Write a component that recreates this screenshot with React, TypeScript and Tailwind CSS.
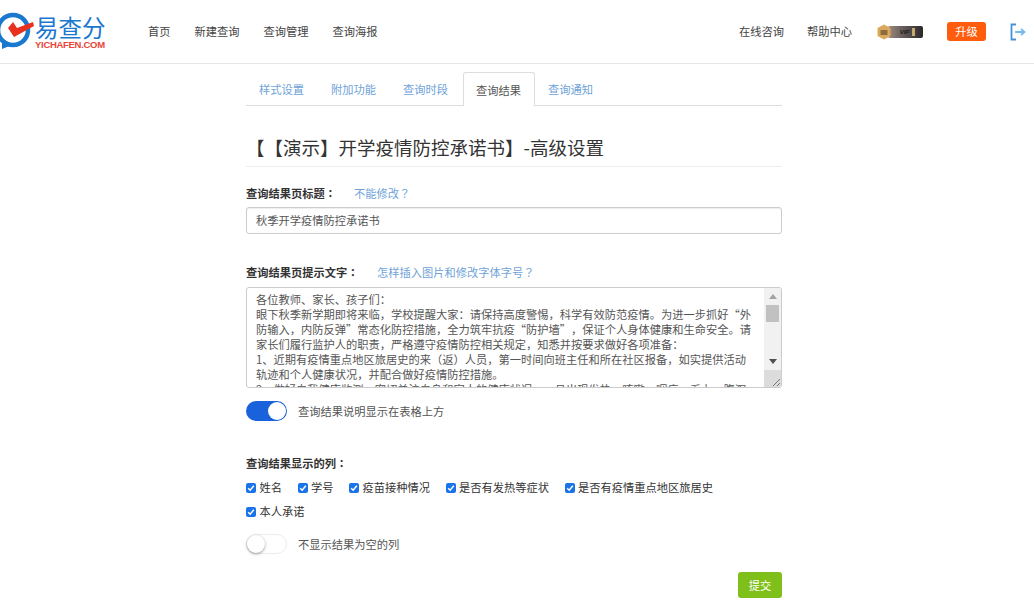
import React from "react"

const FONT = `"Noto Sans CJK SC", "Liberation Sans", sans-serif`
const PUNCT = `"Noto Sans CJK TC", sans-serif`

const navLeft = ["首页", "新建查询", "查询管理", "查询海报"]
const tabs = ["样式设置", "附加功能", "查询时段", "查询结果", "查询通知"]
const columns = ["姓名", "学号", "疫苗接种情况", "是否有发热等症状", "是否有疫情重点地区旅居史", "本人承诺"]

const notice = `各位教师、家长、孩子们：
眼下秋季新学期即将来临，学校提醒大家：请保持高度警惕，科学有效防范疫情。为进一步抓好“外防输入，内防反弹”常态化防控措施，全力筑牢抗疫“防护墙”，保证个人身体健康和生命安全。请家长们履行监护人的职责，严格遵守疫情防控相关规定，知悉并按要求做好各项准备：
1、近期有疫情重点地区旅居史的来（返）人员，第一时间向班主任和所在社区报备，如实提供活动轨迹和个人健康状况，并配合做好疫情防控措施。
2、做好自我健康监测，密切关注自身和家人的健康状况，一旦出现发热、咳嗽、咽痛、乏力、腹泻等症状，及时就医并报告学校。`

const LogoMark = () => (
  <svg width="36" height="50" viewBox="0 0 36 50" className="shrink-0">
    <circle cx="13" cy="23" r="15" fill="none" stroke="#1a78cf" strokeWidth="4.5" />
    <path d="M2 31 L2 42 L12 38 Z" fill="#1a78cf" />
    <path d="M8 21 L14 30 L34 19 L33 15 L17 21 L13 15 Z" fill="#e8301f" />
  </svg>
)

const VipBadge = () => (
  <div className="relative flex h-4 w-[47px] items-center">
    <div className="absolute right-0 flex h-3 w-[35px] items-center justify-center gap-[3px] rounded-[2px] bg-[linear-gradient(90deg,#9c8a7a,#6a5f60_40%,#2c282a)] pl-1">
      <span className="font-['Liberation_Sans'] text-[6px] font-bold italic leading-none text-[#1f1b1d]">VIP</span>
      <span className="h-2 w-[3px] bg-[#c9a86e]" />
    </div>
    <svg width="16" height="16" viewBox="0 0 16 16" className="absolute left-0">
      <path d="M8 0.5 L14.5 4 V12 L8 15.5 L1.5 12 V4 Z" fill="#dba85f" />
      <rect x="4.5" y="6" width="7" height="5" rx="0.5" fill="#8f6a3b" />
    </svg>
  </div>
)

const Toggle = ({ on }: { on: boolean }) => (
  <span
    className={
      on
        ? "flex h-5 w-[41px] items-center justify-end rounded-full bg-[#1a62dc] pr-px"
        : "flex h-5 w-[41px] items-center justify-start rounded-full border border-[#ececec] bg-white"
    }
  >
    <span
      className={
        on
          ? "h-[18px] w-[18px] rounded-full bg-white"
          : "h-[18px] w-[18px] rounded-full bg-white shadow-[0_1px_3px_rgba(0,0,0,0.4)]"
      }
    />
  </span>
)

const Check = ({ label }: { label: string }) => (
  <label className="flex items-center gap-[3.5px] text-[11.25px] leading-[17px] text-[#333]">
    <span className="flex h-[10px] w-[10px] items-center justify-center rounded-[2px] bg-[#1a73e8]">
      <svg width="8" height="8" viewBox="0 0 8 8">
        <path d="M1.2 4.2 L3.2 6.2 L6.8 1.8" fill="none" stroke="white" strokeWidth="1.5" />
      </svg>
    </span>
    {label}
  </label>
)

const Scrollbar = () => (
  <div className="absolute bottom-px right-px top-px flex w-[17px] flex-col rounded-r-[3px] bg-[#f1f1f1]">
    <div className="flex h-[17px] items-center justify-center">
      <span className="h-0 w-0 border-x-[4px] border-b-[5px] border-x-transparent border-b-[#a3a3a3]" />
    </div>
    <div className="mx-auto h-[17px] w-[13px] bg-[#c1c1c1]" />
    <div className="mt-auto flex h-[17px] items-center justify-center">
      <span className="h-0 w-0 border-x-[4px] border-t-[5px] border-x-transparent border-t-[#505050]" />
    </div>
    <div className="flex h-[17px] items-end justify-end bg-[#dcdcdc]">
      <svg width="10" height="10" viewBox="0 0 10 10">
        <path d="M9 2 L2 9 M9 6 L6 9" stroke="#777" strokeWidth="1" />
      </svg>
    </div>
  </div>
)

const App = () => {
  return (
    <div
      className="h-[600px] w-[1034px] overflow-hidden bg-white [text-spacing-trim:space-all]"
      style={{ fontFamily: FONT }}
    >
      <header className="flex h-16 items-center border-b border-[#e7e7e7] text-[11.25px] text-[#444]">
        <div className="flex w-[148px] items-center">
          <LogoMark />
          <div className="-ml-px flex flex-col">
            <span className="text-[23.5px] font-normal leading-[25px] text-[#1a78cf]">易查分</span>
            <span className="font-['Liberation_Sans'] text-[9.5px] font-bold leading-[9px] tracking-[-0.3px] text-[#e8473a]">
              YICHAFEN.COM
            </span>
          </div>
        </div>
        <nav className="flex gap-6">
          {navLeft.map((item) => (
            <span key={item}>{item}</span>
          ))}
        </nav>
        <div className="ml-auto flex items-center">
          <span>在线咨询</span>
          <span className="ml-[23px]">帮助中心</span>
          <span className="ml-[24px]">
            <VipBadge />
          </span>
          <span className="ml-[24px] flex h-[19px] w-[39px] items-center justify-center rounded-[3px] bg-[#ff5c0d] text-white">
            升级
          </span>
          <svg width="16" height="18" viewBox="0 0 16 18" className="ml-6 mr-[8px]">
            <path d="M6 1.5 H1.5 V16.5 H6" fill="none" stroke="#4a90d9" strokeWidth="1.8" />
            <path d="M5 9 H14 M11 6 L14.5 9 L11 12" fill="none" stroke="#7ab8ee" strokeWidth="1.8" />
          </svg>
        </div>
      </header>

      <main className="mx-auto w-[536px] -translate-x-[3px]">
        <div className="mt-2 flex h-[34px] border-b border-[#ddd] text-[11.25px]">
          {tabs.map((tab) =>
            tab === "查询结果" ? (
              <span
                key={tab}
                className="ml-px h-[34px] rounded-t-[3px] border border-b-0 border-[#ddd] bg-white px-[12.5px] leading-[34px] text-[#555]"
              >
                {tab}
              </span>
            ) : (
              <span key={tab} className="px-[13.5px] leading-[35px] text-[#6fa3d8] first:pl-[13px]">
                {tab}
              </span>
            )
          )}
        </div>

        <h1 className="mt-[22px] h-[39px] border-b border-[#eee] text-[18.5px] font-normal leading-[39px] text-[#333]">
          【【演示】开学疫情防控承诺书】-高级设置
        </h1>

        <div className="mt-[17px] flex text-[11.25px] leading-[19px]">
          <span className="w-[108px] font-bold text-[#333]">
            查询结果页标题<span style={{ fontFamily: PUNCT }}>：</span>
          </span>
          <span className="text-[#6fa3d8]">
            不能修改<span style={{ fontFamily: PUNCT }}>？</span>
          </span>
        </div>
        <div className="mt-[4px] h-[27px] rounded-[3px] border border-[#ccc] px-[9px] text-[11.25px] leading-[25px] text-[#555] shadow-[inset_0_1px_1px_rgba(0,0,0,0.07)]">
          秋季开学疫情防控承诺书
        </div>

        <div className="mt-[29px] flex text-[11.25px] leading-[19px]">
          <span className="w-[131px] font-bold text-[#333]">
            查询结果页提示文字<span style={{ fontFamily: PUNCT }}>：</span>
          </span>
          <span className="text-[#6fa3d8]">
            怎样插入图片和修改字体字号<span style={{ fontFamily: PUNCT }}>？</span>
          </span>
        </div>
        <div className="relative mt-[5px] h-[101px]">
          <textarea
            readOnly
            value={notice}
            className="block h-full w-full resize-none overflow-hidden rounded-[3px] border border-[#ccc] py-[4px] pl-[9px] pr-[26px] text-[11.25px] leading-[15px] text-[#555] outline-none"
          />
          <Scrollbar />
        </div>

        <div className="mt-[13px] flex items-center gap-[11px] text-[11.25px] text-[#555]">
          <Toggle on />
          <span>查询结果说明显示在表格上方</span>
        </div>

        <div className="mt-[33px] text-[11.25px] font-bold leading-[19px] text-[#333]">
          查询结果显示的列<span style={{ fontFamily: PUNCT }}>：</span>
        </div>

        <div className="mt-[6px] flex flex-wrap gap-x-[15.5px] gap-y-[7px]">
          {columns.map((col) => (
            <Check key={col} label={col} />
          ))}
        </div>

        <div className="mt-[14px] flex items-center gap-[11px] text-[11.25px] text-[#555]">
          <Toggle on={false} />
          <span>不显示结果为空的列</span>
        </div>

        <div className="mt-[18px] flex justify-end">
          <button className="h-[26px] w-[44px] rounded-[3px] bg-[#7fbf1a] text-[11.25px] text-white">提交</button>
        </div>
      </main>
    </div>
  )
}

export default App
